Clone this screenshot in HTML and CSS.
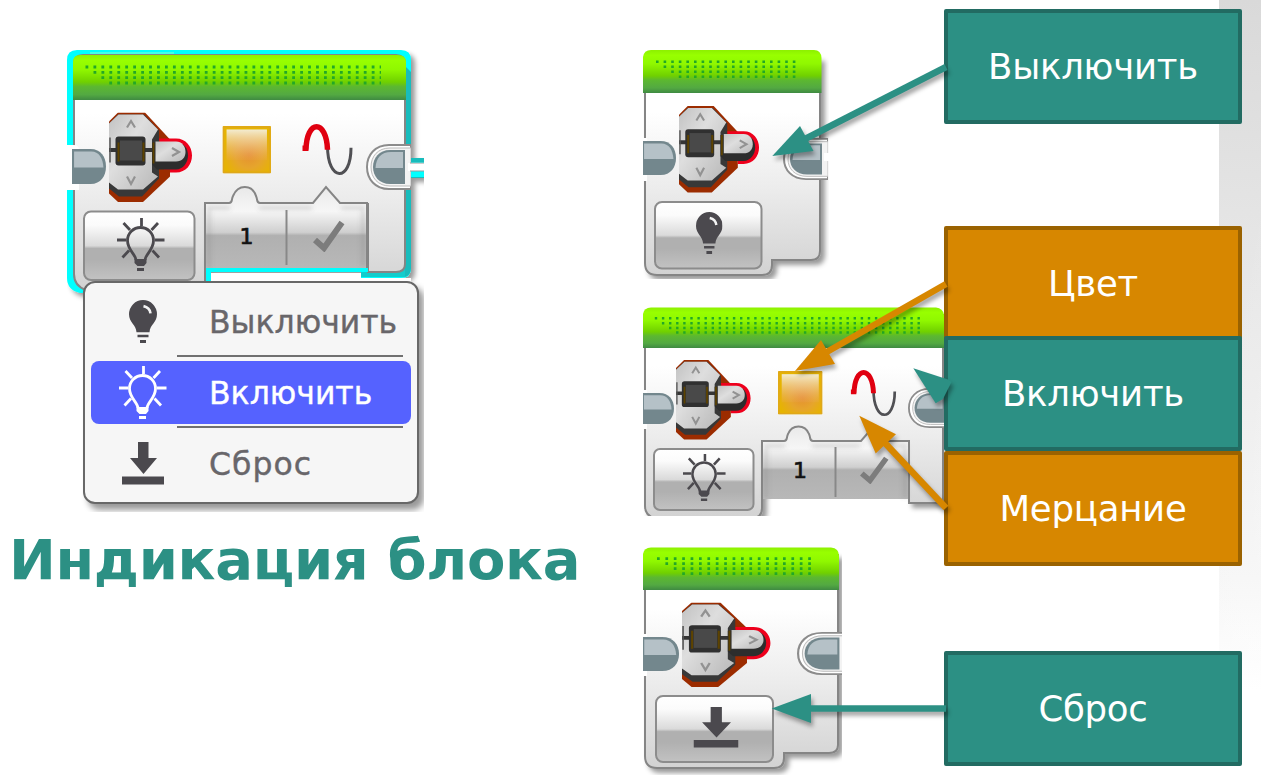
FILE: index.html
```html
<!DOCTYPE html>
<html lang="ru">
<head>
<meta charset="utf-8">
<title>Индикация блока</title>
<link rel="stylesheet" href="styles.css">
</head>
<body>
<svg class="defs" width="0" height="0" aria-hidden="true">
  <defs>
    <linearGradient id="green" x1="0" y1="0" x2="0" y2="1">
      <stop offset="0" stop-color="#8df000"/><stop offset=".12" stop-color="#98ff00"/><stop offset=".32" stop-color="#90f800"/>
      <stop offset=".6" stop-color="#70d000"/><stop offset=".7" stop-color="#5cb830"/><stop offset=".88" stop-color="#53a942"/><stop offset="1" stop-color="#3f8a42"/>
    </linearGradient>
    <linearGradient id="body" x1="0" y1="0" x2="0" y2="1">
      <stop offset="0" stop-color="#fff"/><stop offset=".25" stop-color="#fff"/><stop offset=".6" stop-color="#ececec"/><stop offset="1" stop-color="#d2d2d2"/>
    </linearGradient>
    <linearGradient id="btn" x1="0" y1="0" x2="0" y2="1">
      <stop offset="0" stop-color="#fff"/><stop offset=".2" stop-color="#fbfbfb"/><stop offset=".5" stop-color="#dadada"/>
      <stop offset=".54" stop-color="#b0b0b0"/><stop offset=".7" stop-color="#b0b0b0"/><stop offset="1" stop-color="#c2c2c2"/>
    </linearGradient>
    <linearGradient id="panel" x1="0" y1="0" x2="0" y2="1">
      <stop offset="0" stop-color="#e9e9e9"/><stop offset=".3" stop-color="#f6f6f6"/><stop offset=".56" stop-color="#cfcfcf"/>
      <stop offset=".6" stop-color="#b0b0b0"/><stop offset="1" stop-color="#b8b8b8"/>
    </linearGradient>
    <linearGradient id="key" x1="0" y1="0" x2="1" y2="1">
      <stop offset="0" stop-color="#c2c2c2"/><stop offset=".4" stop-color="#dedede"/><stop offset="1" stop-color="#b8b8b8"/>
    </linearGradient>
    <radialGradient id="amber" cx=".55" cy=".62" r=".6">
      <stop offset="0" stop-color="#e59030"/><stop offset=".5" stop-color="#e6a52c"/><stop offset="1" stop-color="#e6b400"/>
    </radialGradient>
    <linearGradient id="gloss" x1="0" y1="0" x2="0" y2="1">
      <stop offset="0" stop-color="#f4efdd" stop-opacity=".95"/><stop offset="1" stop-color="#f0b080" stop-opacity=".1"/>
    </linearGradient>
    <filter id="shade" x="-10%" y="-10%" width="125%" height="125%">
      <feDropShadow dx="4" dy="4" stdDeviation="2.5" flood-color="#000" flood-opacity=".4"/>
    </filter>
    <filter id="inner" x="-10%" y="-10%" width="120%" height="120%"><feGaussianBlur stdDeviation="2"/></filter>

    <symbol id="brick" viewBox="0 0 84 90" preserveAspectRatio="none">
      <path d="M0 9 9 0H36L61 27V64L34 89.500H9L0 81Z" fill="#9c2c00"/>
      <path d="M0 11 9 2H35L50 18V66L33 84H10L0 76Z" fill="#383838"/>
      <path d="M0 11 9.500 2H34L49 17 43 27V60L49 64 34 77H9L0 70Z" fill="url(#key)"/>
      <path d="M0 37.500H48" stroke="#353535" stroke-width="4"/>
      <path d="M1 25V50" stroke="#555" stroke-width="1.500"/>
      <rect x="6.500" y="24" width="30" height="29" rx="3" fill="#303030"/>
      <path d="M9.500 30V49M34.500 30V49" stroke="#5d4300" stroke-width="2"/>
      <rect x="11" y="28" width="22" height="20" fill="#494949"/>
      <path d="M50 26H67C77 26 83 34 83 43S77 60 67 60H61V57H55Z" fill="#ee001c"/>
      <path d="M43 30H67C75 30 79 36 79 43S74 57 67 57H48L43 52Z" fill="#2d2d2d"/>
      <path d="M46.500 29H67C73 29 76.500 34 76.500 39.500S73 49 67 49H46.500Z" fill="url(#key)"/>
      <path d="M44.500 30V51" stroke="#5d4300" stroke-width="1.800"/>
      <path d="M18 15 22 8.500 26 15M18 64 22 71.500 26 64M63 35.500 70 39.500 63 43.500" fill="none" stroke="#929292" stroke-width="2.200"/>
    </symbol>
    <symbol id="lamp" viewBox="0 0 48 54" preserveAspectRatio="none">
      <g fill="none" stroke="currentColor" stroke-width="2.800">
        <path d="M19 42C18.500 36 10.500 32 10.500 22.500A13 13 0 0 1 36.500 22.500C36.500 32 28.500 36 28 42"/>
        <path d="M24.500 0V8M0 22H9M38 22H47.500M6.500 5 13 12M41 5 34.500 12M5.500 39.500 12 32.500M42 39.500 35.500 32.500"/>
      </g>
      <path d="M17.500 41H29.500V45L27 48H20.500L17.500 45ZM20 50H27V53H20Z" fill="currentColor"/>
    </symbol>
    <symbol id="bulb" viewBox="0 0 28 42" preserveAspectRatio="none">
      <path d="M14 0A14 14 0 0 1 28 14C28 22 21 24 20.500 31.500H7.500C7 24 0 22 0 14A14 14 0 0 1 14 0ZM8.500 34H19.500V36.500H8.500ZM11 39H17V42H11Z" fill="#4b494e"/>
      <path d="M14.500 6C19 7 21 9 21.500 13" fill="none" stroke="#f4f4f4" stroke-width="2.600"/>
    </symbol>
    <symbol id="reset" viewBox="0 0 42 43" preserveAspectRatio="none">
      <path d="M16 0H26.500V16H35L21.500 32 8 16H16ZM0 34.500H42V42.500H0Z" fill="#4b494e"/>
    </symbol>
    <symbol id="wave" viewBox="0 0 52 52" preserveAspectRatio="none">
      <path d="M26 22C26 59 49.500 59 49.500 24" fill="none" stroke="#505054" stroke-width="3"/>
      <path d="M1 24.500H7M4.500 26C5 -5 25 -5 26 26" fill="none" stroke="#e00010" stroke-width="5.500"/>
    </symbol>
    <symbol id="swatch" viewBox="0 0 48 48" preserveAspectRatio="none">
      <rect width="48" height="48" rx="1.500" fill="#e6b400"/>
      <rect x="2" y="2" width="44" height="44" fill="url(#amber)"/>
      <rect x="4" y="3.500" width="40" height="31" fill="url(#gloss)"/>
      <rect x="1" y="1" width="46" height="46" fill="none" stroke="#dfa71c" stroke-width="1.500"/>
    </symbol>
    <symbol id="check" viewBox="0 0 32 32" preserveAspectRatio="none">
      <path d="M2 20 11 28 29 2.500" fill="none" stroke="#7c7c7c" stroke-width="6"/>
    </symbol>
    <symbol id="plug-in" viewBox="0 0 33 35" preserveAspectRatio="none">
      <path d="M0 0H18C28 0 33 8 33 17.500S28 35 18 35H0Z" fill="#73878d"/>
      <path d="M2 2.500H19C26 2.500 30 9 30.500 18.500H2Z" fill="#b5c1c7"/>
    </symbol>
    <symbol id="plug-out" viewBox="0 0 45 46" preserveAspectRatio="none">
      <path d="M45 1H23C9 1 1 11 1 23S9 45 23 45H45Z" fill="#fff" stroke="#8c8c8c" stroke-width="2"/>
      <path d="M45 4H24C12 4 5 12 5 23S12 42 24 42H45Z" fill="#f3f3f3" stroke="#bbb" stroke-width="1"/>
      <path d="M39 6H24C13 6 7 14 7 23S13 40 24 40H39Z" fill="#73878d"/>
      <path d="M37 8H25C15 8 10 14 9.500 24H37Z" fill="#b5c1c7"/>
    </symbol>
  </defs>
</svg>

<main class="slide">
  <div class="strip"></div>

  <figure class="block block-main">
    <svg viewBox="67 50 357 462" width="357" height="462">
      <g filter="url(#shade)">
        <path d="M67 60Q67 50 77 50H401Q411 50 411 60V158H424V178H411V268Q411 278 401 278H361V272H211V293H80Q67 290 67 278Z" fill="#0ff"/>
      </g>
      <path d="M405 66 411 72V158H424V162H411V177H424V178H411V268Q411 275 405 277Z" fill="#18bcbc"/>
      <path d="M211 273H361V278H411V300H211Z" fill="#fff"/>
      <path d="M361 268H405V277H361Z" fill="#12cccc"/>
      <path d="M90 53H174" stroke="#45ffe8" stroke-width="2"/>
      <path d="M74 64Q74 55 83 55H396Q405 55 405 64V264Q405 272 396 272H368V204H205V290H86Q74 286 74 274Z" fill="url(#body)" stroke="#858585" stroke-width="2"/>
      <path d="M73 100V62Q73 55 80 55H398Q406 55 406 62V100Z" fill="url(#green)"/>
      <g stroke="#23a826" stroke-width="2.800" stroke-dasharray="2.800 5.150">
        <path d="M85.500 67H381M93.500 72.300H381M101.400 77.700H381M109.300 83H381"/>
      </g>
      <path d="M67 145H74Q79 145 79 150V190H67Z" fill="#fff"/>
      <use href="#plug-in" x="72" y="149" width="34" height="35"/>
      <use href="#plug-out" x="366" y="144" width="45" height="46"/>
      <path d="M408 163H424V171H408Z" fill="#fff"/><path d="M410 163H424M410 171H424" stroke="#999" stroke-width="1"/>
      <use href="#brick" x="109" y="112.500" width="84" height="90"/>
      <use href="#swatch" x="222.500" y="126" width="48.500" height="47.500"/>
      <use href="#wave" x="301.500" y="124" width="52" height="51.500"/>
      <path d="M205 268V203H229C233 203 231 200 233 196 238 184 252 184 256 196 258 200 256 203 260 203H313L326 187 340 203H367V268Z" fill="url(#panel)"/>
      <path d="M209 268V208H230M259 208H312M341 208H363V266" fill="none" stroke="#777" stroke-opacity=".22" stroke-width="4" filter="url(#inner)"/>
      <path d="M205 281V203H229C233 203 231 200 233 196 238 184 252 184 256 196 258 200 256 203 260 203H313L326 187 340 203H367V271" fill="none" stroke="#858585" stroke-width="2"/>
      <path d="M286.500 210V265" stroke="#888" stroke-width="2"/>
      <path d="M206 268H368V272H206Z" fill="#0ff"/>
      <text x="246.500" y="244" class="digit">1</text>
      <use href="#check" x="313" y="220" width="32" height="32"/>
      <rect x="84" y="211.500" width="110.500" height="68.500" rx="7" fill="url(#btn)" stroke="#8c8c8c" stroke-width="2"/>
      <use href="#lamp" x="117" y="218" width="48" height="54" class="ink"/>
    </svg>
    <ul class="menu">
      <li class="row"><svg class="icon" width="28" height="43"><use href="#bulb" width="28" height="43"/></svg><span class="name">Выключить</span></li>
      <li class="row active"><svg class="icon" width="48" height="54"><use href="#lamp" width="48" height="54"/></svg><span class="name">Включить</span></li>
      <li class="row"><svg class="icon" width="42" height="43"><use href="#reset" width="42" height="43"/></svg><span class="name wide">Сброс</span></li>
    </ul>
  </figure>

  <h1 class="title">Индикация блока</h1>

  <figure class="block block-off">
    <svg viewBox="643 50 186 229" width="186" height="229">
      <path d="M645 58H820V251Q820 260 811 260H772V265Q772 275 762 275H657Q645 275 645 263Z" fill="url(#body)" stroke="#858585" stroke-width="2" filter="url(#shade)"/>
      <path d="M643 93V57Q644 50 651 50H814Q821 50 821.500 58V93Z" fill="url(#green)"/>
      <g stroke="#23a826" stroke-width="2.600" stroke-dasharray="2.600 5">
        <path d="M656 61.700H797M663.600 66.700H797M671.200 71.700H797M678.800 76.700H797"/>
      </g>
      <path d="M643 138H647V181H643Z" fill="#fff"/>
      <use href="#plug-in" x="642" y="141" width="34" height="34"/>
      <use href="#plug-out" x="783" y="138" width="45" height="42"/>
      <path d="M824 153H829V161H824Z" fill="#fff"/>
      <use href="#brick" x="679" y="106" width="81" height="87"/>
      <rect x="655" y="202" width="106.500" height="66.500" rx="7" fill="url(#btn)" stroke="#8c8c8c" stroke-width="2"/>
      <use href="#bulb" x="696" y="212" width="26.500" height="42"/>
    </svg>
  </figure>

  <figure class="block block-on">
    <svg viewBox="643 307 301 209" width="301" height="209">
      <path d="M645 315H943V503H909V441H762V508Q762 518 752 518H655Q645 516 645 506Z" fill="url(#body)" stroke="#858585" stroke-width="2" filter="url(#shade)"/>
      <path d="M643 348V314Q644 307.500 651 307.500H936Q943 308 944 315V348Z" fill="url(#green)"/>
      <g stroke="#23a826" stroke-width="2.400" stroke-dasharray="2.400 4.700">
        <path d="M654.800 318.300H920M661.900 323.200H920M669 328H920M676.100 332.500H920"/>
      </g>
      <path d="M643 390H647V429H643Z" fill="#fff"/>
      <use href="#plug-in" x="642" y="393" width="32" height="31"/>
      <use href="#plug-out" x="908" y="388" width="42" height="40"/>
      <use href="#brick" x="676" y="360" width="75.500" height="80"/>
      <use href="#swatch" x="778" y="371" width="44.500" height="43.500"/>
      <use href="#wave" x="850" y="370" width="47" height="46.500"/>
      <path d="M762 499V441H784C788 441 786 438 788 434 792 424 805 424 809 434 811 438 809 441 813 441H861L873 427 886 441H909V499Z" fill="url(#panel)"/>
      <path d="M766 498V446H785M812 446H860M887 446H905V498" fill="none" stroke="#777" stroke-opacity=".22" stroke-width="4" filter="url(#inner)"/>
      <path d="M762 508V441H784C788 441 786 438 788 434 792 424 805 424 809 434 811 438 809 441 813 441H861L873 427 886 441H909V503" fill="none" stroke="#858585" stroke-width="2"/>
      <path d="M835.500 447V497" stroke="#888" stroke-width="2"/>
      <text x="800" y="478" class="digit">1</text>
      <use href="#check" x="860" y="456" width="29" height="28"/>
      <rect x="654" y="449" width="99.500" height="61" rx="6" fill="url(#btn)" stroke="#8c8c8c" stroke-width="2"/>
      <use href="#lamp" x="683" y="454" width="43" height="48" class="ink"/>
    </svg>
  </figure>

  <figure class="block block-reset">
    <svg viewBox="643 547 199 228" width="199" height="228">
      <path d="M645 555H838V745Q838 753 829 753H784V758Q784 768 774 768H657Q645 768 645 756Z" fill="url(#body)" stroke="#858585" stroke-width="2" filter="url(#shade)"/>
      <path d="M643 590V554Q644 547.500 651 547.500H831Q839 548 839 556V590Z" fill="url(#green)"/>
      <g stroke="#23a826" stroke-width="2.700" stroke-dasharray="2.700 5.700">
        <path d="M657 558.700H812M665.400 563.700H812M673.800 568.700H812M682.200 573.700H812"/>
      </g>
      <path d="M643 634H647V676H643Z" fill="#fff"/>
      <use href="#plug-in" x="642" y="637" width="37" height="34"/>
      <use href="#plug-out" x="797" y="632" width="49" height="43"/>
      <use href="#brick" x="682" y="602.500" width="89.500" height="85"/>
      <rect x="656" y="696" width="117" height="66" rx="7" fill="url(#btn)" stroke="#8c8c8c" stroke-width="2"/>
      <use href="#reset" x="693.500" y="707" width="45" height="41"/>
    </svg>
  </figure>

  <div class="labels">
    <div class="label off">Выключить</div>
    <div class="label orange color">Цвет</div>
    <div class="label on">Включить</div>
    <div class="label orange blink">Мерцание</div>
    <div class="label clear">Сброс</div>
  </div>

  <svg class="arrows" viewBox="0 0 1261 783" width="1261" height="783">
    <g class="teal">
      <path d="M946 67 805 139"/><path class="head" d="M772.300 156 800 126 813.500 151Z"/>
      <path d="M946 708.500H808"/><path class="head" d="M771.700 708.500 811 694V723Z"/>
      <path class="head" d="M913.300 368.300 948 379.500 951.500 382 944.500 396 943 399 935.700 403.300Z"/>
    </g>
    <g class="amber">
      <path d="M946 284 825 353"/><path class="head" d="M795 371 821 340 835 364Z"/>
      <path d="M946 508 885 443"/><path class="head" d="M859.300 415.700 896 434.300 875.700 453.500Z"/>
    </g>
  </svg>
</main>
</body>
</html>
```

FILE: styles.css
```css
* { box-sizing: border-box; }
body { margin: 0; background: #fff; font-family: Verdana, "DejaVu Sans", sans-serif; }
.defs { position: absolute; }
.slide { position: relative; width: 1261px; height: 783px; overflow: hidden; background: #fff; }
.strip { position: absolute; top: 0; right: 0; width: 42px; height: 783px;
  background: linear-gradient(100deg, rgba(255,255,255,0) 40%, rgba(255,255,255,.25)), linear-gradient(#d9d9d9, #e6e6e6 32%, #f6f6f6 74%, #fff 88%); }

/* Program blocks on the slide canvas */
.block { position: absolute; margin: 0; overflow: hidden; }
.block > svg { display: block; }
.block-main { left: 67px; top: 50px; width: 357px; height: 462px; }
.block-off { left: 643px; top: 50px; }
.block-on { left: 643px; top: 307px; }
.block-reset { left: 643px; top: 547px; }
.ink { color: #4b494e; }
.digit { font-size: 22px; font-weight: normal; text-anchor: middle; fill: #111; stroke: #111; stroke-width: .7; }

/* Mode menu opened over the main block */
.menu { position: absolute; left: 16px; top: 231px; width: 336px; height: 223px; margin: 0; padding: 7px 6px;
  list-style: none; background: #f6f6f6; border: 2px solid #686868; border-radius: 12px;
  box-shadow: 5px 6px 6px rgba(0,0,0,.4); display: flex; flex-direction: column; gap: 8px; }
.row { position: relative; flex: none; display: grid; grid-template-columns: 104px 1fr; align-items: center;
  height: 63px; border-radius: 8px; color: #68666a; }
.row + .row::before { content: ""; position: absolute; left: 86px; right: 8px; top: -6px; height: 2px; background: #707070; }
.row.active { background: #5562ff; color: #fff; }
.icon { justify-self: center; display: block; }
.name { padding-left: 14px; font-size: 31.500px; line-height: 40px; white-space: nowrap; -webkit-text-stroke: .4px currentColor; }
.name.wide { letter-spacing: 1px; }

.title { position: absolute; left: 9px; top: 527px; margin: 0; font-size: 56px; line-height: 66px;
  font-weight: bold; letter-spacing: -.35px; color: #2c9084; white-space: nowrap; }

.labels { position: absolute; left: 944px; top: 9px; width: 298px; display: flex; flex-direction: column; }
.label { flex: none; height: 115px; display: flex; align-items: center; justify-content: center;
  border: 4px solid #226b62; border-radius: 2px; background: #2c9084; color: #fff;
  font-size: 35.500px; line-height: 42px; letter-spacing: -.25px; }
.label.orange { border-color: #9a6200; background: #d78700; }
.label.color { margin-top: 102px; }
.label.on { margin-top: -5px; position: relative; }
.label.clear { margin-top: 85px; }

.arrows { position: absolute; left: 0; top: 0; fill: none; stroke-width: 6.500; }
.arrows g { filter: drop-shadow(2px 4px 2px rgba(0,0,0,.35)); }
.arrows .head { stroke: none; }
.teal { stroke: #2c9084; }
.teal .head { fill: #2c9084; }
.amber { stroke: #d78700; }
.amber .head { fill: #d78700; }
```
